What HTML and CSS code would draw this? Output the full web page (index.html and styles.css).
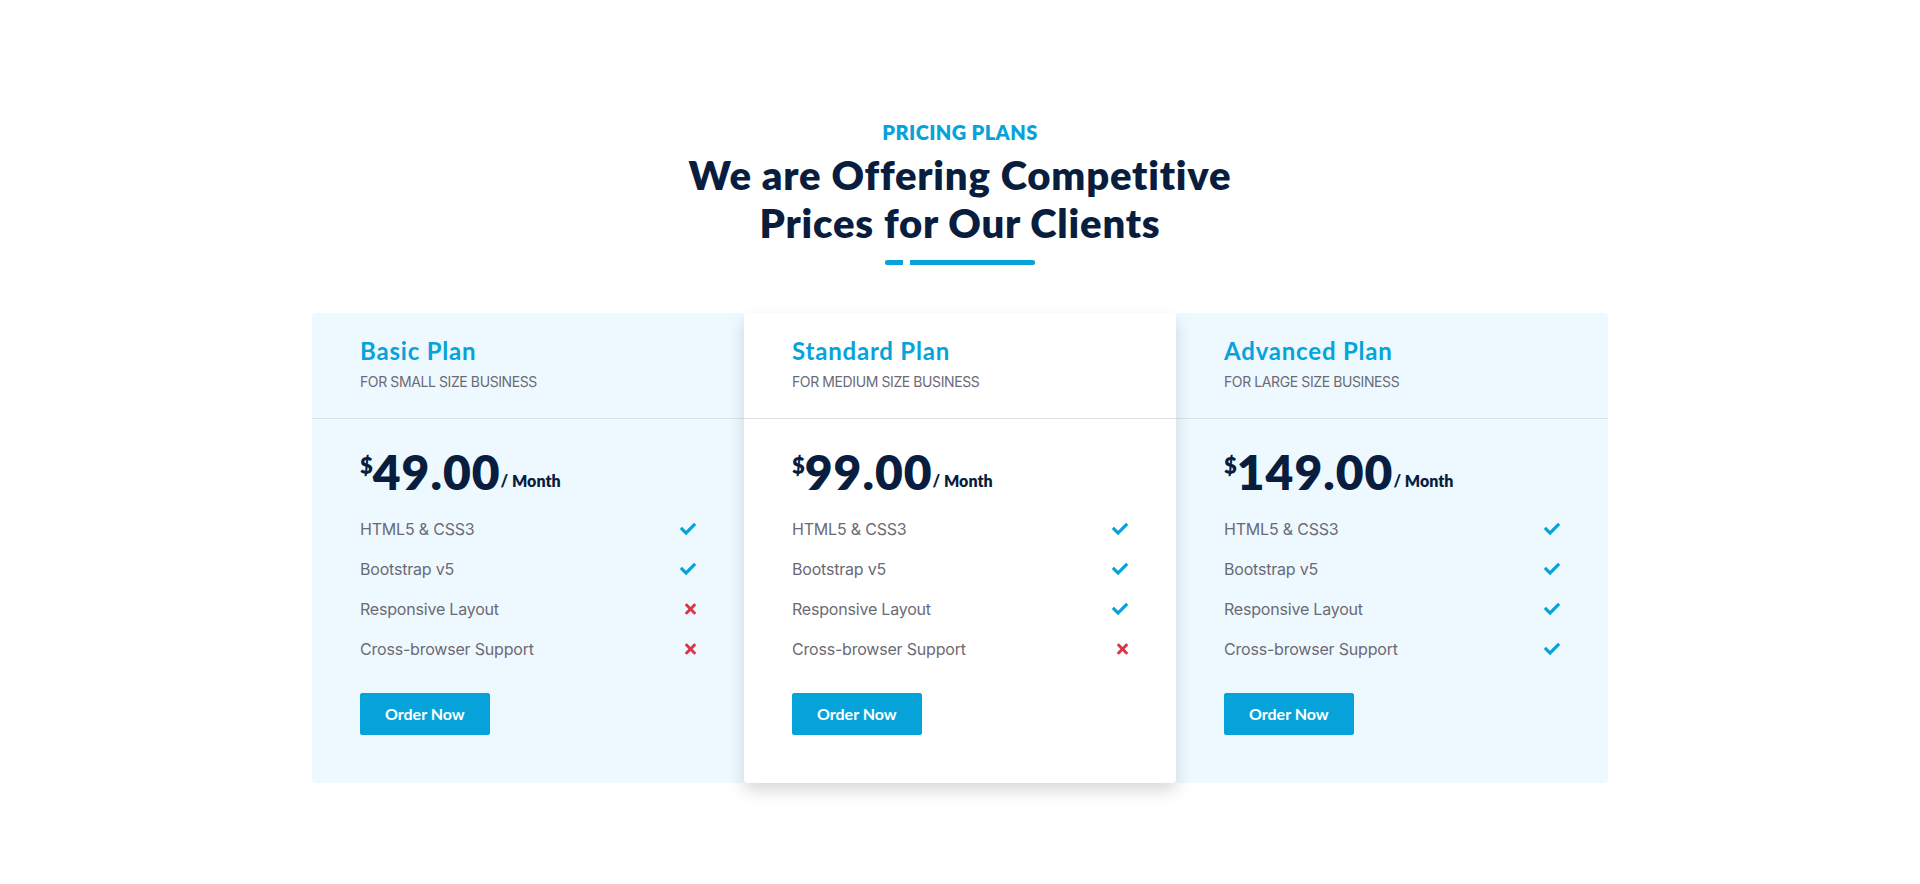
FILE: index.html
```
<!DOCTYPE html>
<html lang="en">
<head>
<meta charset="utf-8">
<title>Pricing Plans</title>
<link rel="stylesheet" href="styles.css">
</head>
<body>
<section class="pricing">
  <div class="section-title">
    <h5 class="eyebrow">Pricing Plans</h5>
    <h1 class="title">We are Offering Competitive Prices for Our Clients</h1>
    <div class="underline"><span class="seg-a"></span><span class="seg-b"></span></div>
  </div>

  <div class="plans">
    <div class="plan">
      <div class="plan-head">
        <h4 class="plan-name">Basic Plan</h4>
        <div class="plan-sub">For Small Size Business</div>
      </div>
      <div class="plan-body">
        <h1 class="price"><span class="cur">$</span><span class="amt">49.00</span><span class="per">/ Month</span></h1>
        <ul class="features">
          <li><span>HTML5 &amp; CSS3</span><svg class="ic-check" viewBox="0 0 512 512"><path d="M173.898 439.404l-166.4-166.4c-9.997-9.997-9.997-26.206 0-36.204l36.203-36.204c9.997-9.998 26.207-9.998 36.204 0L192 312.69 432.095 72.596c9.997-9.997 26.207-9.997 36.204 0l36.203 36.204c9.997 9.997 9.997 26.206 0 36.204l-294.4 294.401c-9.998 9.997-26.207 9.997-36.204-.001z"/></svg></li>
          <li><span>Bootstrap v5</span><svg class="ic-check" viewBox="0 0 512 512"><path d="M173.898 439.404l-166.4-166.4c-9.997-9.997-9.997-26.206 0-36.204l36.203-36.204c9.997-9.998 26.207-9.998 36.204 0L192 312.69 432.095 72.596c9.997-9.997 26.207-9.997 36.204 0l36.203 36.204c9.997 9.997 9.997 26.206 0 36.204l-294.4 294.401c-9.998 9.997-26.207 9.997-36.204-.001z"/></svg></li>
          <li><span>Responsive Layout</span><svg class="ic-times" viewBox="0 0 352 512"><path d="M242.72 256l100.07-100.07c12.28-12.28 12.28-32.19 0-44.48l-22.24-22.24c-12.28-12.28-32.19-12.28-44.48 0L176 189.28 75.93 89.21c-12.28-12.28-32.19-12.28-44.48 0L9.21 111.45c-12.28 12.28-12.28 32.19 0 44.48L109.28 256 9.21 356.07c-12.28 12.28-12.28 32.19 0 44.48l22.24 22.24c12.28 12.28 32.2 12.28 44.48 0L176 322.72l100.07 100.07c12.28 12.28 32.2 12.28 44.48 0l22.24-22.240c12.28-12.28 12.28-32.19 0-44.48L242.72 256z"/></svg></li>
          <li><span>Cross-browser Support</span><svg class="ic-times" viewBox="0 0 352 512"><path d="M242.72 256l100.07-100.07c12.28-12.28 12.28-32.19 0-44.48l-22.24-22.24c-12.28-12.28-32.19-12.28-44.48 0L176 189.28 75.93 89.21c-12.28-12.28-32.19-12.28-44.48 0L9.21 111.45c-12.28 12.28-12.28 32.19 0 44.48L109.28 256 9.21 356.07c-12.28 12.28-12.28 32.19 0 44.48l22.24 22.24c12.28 12.28 32.2 12.28 44.48 0L176 322.72l100.07 100.07c12.28 12.28 32.2 12.28 44.48 0l22.24-22.240c12.28-12.28 12.28-32.19 0-44.48L242.72 256z"/></svg></li>
        </ul>
        <a class="btn" href="#">Order Now</a>
      </div>
    </div>

    <div class="plan plan-featured">
      <div class="plan-head">
        <h4 class="plan-name">Standard Plan</h4>
        <div class="plan-sub">For Medium Size Business</div>
      </div>
      <div class="plan-body">
        <h1 class="price"><span class="cur">$</span><span class="amt">99.00</span><span class="per">/ Month</span></h1>
        <ul class="features">
          <li><span>HTML5 &amp; CSS3</span><svg class="ic-check" viewBox="0 0 512 512"><path d="M173.898 439.404l-166.4-166.4c-9.997-9.997-9.997-26.206 0-36.204l36.203-36.204c9.997-9.998 26.207-9.998 36.204 0L192 312.69 432.095 72.596c9.997-9.997 26.207-9.997 36.204 0l36.203 36.204c9.997 9.997 9.997 26.206 0 36.204l-294.4 294.401c-9.998 9.997-26.207 9.997-36.204-.001z"/></svg></li>
          <li><span>Bootstrap v5</span><svg class="ic-check" viewBox="0 0 512 512"><path d="M173.898 439.404l-166.4-166.4c-9.997-9.997-9.997-26.206 0-36.204l36.203-36.204c9.997-9.998 26.207-9.998 36.204 0L192 312.69 432.095 72.596c9.997-9.997 26.207-9.997 36.204 0l36.203 36.204c9.997 9.997 9.997 26.206 0 36.204l-294.4 294.401c-9.998 9.997-26.207 9.997-36.204-.001z"/></svg></li>
          <li><span>Responsive Layout</span><svg class="ic-check" viewBox="0 0 512 512"><path d="M173.898 439.404l-166.4-166.4c-9.997-9.997-9.997-26.206 0-36.204l36.203-36.204c9.997-9.998 26.207-9.998 36.204 0L192 312.69 432.095 72.596c9.997-9.997 26.207-9.997 36.204 0l36.203 36.204c9.997 9.997 9.997 26.206 0 36.204l-294.4 294.401c-9.998 9.997-26.207 9.997-36.204-.001z"/></svg></li>
          <li><span>Cross-browser Support</span><svg class="ic-times" viewBox="0 0 352 512"><path d="M242.72 256l100.07-100.07c12.28-12.28 12.28-32.19 0-44.48l-22.24-22.24c-12.28-12.28-32.19-12.28-44.48 0L176 189.28 75.93 89.21c-12.28-12.28-32.19-12.28-44.48 0L9.21 111.45c-12.28 12.28-12.28 32.19 0 44.48L109.28 256 9.21 356.07c-12.28 12.28-12.28 32.19 0 44.48l22.24 22.24c12.28 12.28 32.2 12.28 44.48 0L176 322.72l100.07 100.07c12.28 12.28 32.2 12.28 44.48 0l22.24-22.240c12.28-12.28 12.28-32.19 0-44.48L242.72 256z"/></svg></li>
        </ul>
        <a class="btn" href="#">Order Now</a>
      </div>
    </div>

    <div class="plan">
      <div class="plan-head">
        <h4 class="plan-name">Advanced Plan</h4>
        <div class="plan-sub">For Large Size Business</div>
      </div>
      <div class="plan-body">
        <h1 class="price"><span class="cur">$</span><span class="amt">149.00</span><span class="per">/ Month</span></h1>
        <ul class="features">
          <li><span>HTML5 &amp; CSS3</span><svg class="ic-check" viewBox="0 0 512 512"><path d="M173.898 439.404l-166.4-166.4c-9.997-9.997-9.997-26.206 0-36.204l36.203-36.204c9.997-9.998 26.207-9.998 36.204 0L192 312.69 432.095 72.596c9.997-9.997 26.207-9.997 36.204 0l36.203 36.204c9.997 9.997 9.997 26.206 0 36.204l-294.4 294.401c-9.998 9.997-26.207 9.997-36.204-.001z"/></svg></li>
          <li><span>Bootstrap v5</span><svg class="ic-check" viewBox="0 0 512 512"><path d="M173.898 439.404l-166.4-166.4c-9.997-9.997-9.997-26.206 0-36.204l36.203-36.204c9.997-9.998 26.207-9.998 36.204 0L192 312.69 432.095 72.596c9.997-9.997 26.207-9.997 36.204 0l36.203 36.204c9.997 9.997 9.997 26.206 0 36.204l-294.4 294.401c-9.998 9.997-26.207 9.997-36.204-.001z"/></svg></li>
          <li><span>Responsive Layout</span><svg class="ic-check" viewBox="0 0 512 512"><path d="M173.898 439.404l-166.4-166.4c-9.997-9.997-9.997-26.206 0-36.204l36.203-36.204c9.997-9.998 26.207-9.998 36.204 0L192 312.69 432.095 72.596c9.997-9.997 26.207-9.997 36.204 0l36.203 36.204c9.997 9.997 9.997 26.206 0 36.204l-294.4 294.401c-9.998 9.997-26.207 9.997-36.204-.001z"/></svg></li>
          <li><span>Cross-browser Support</span><svg class="ic-check" viewBox="0 0 512 512"><path d="M173.898 439.404l-166.4-166.4c-9.997-9.997-9.997-26.206 0-36.204l36.203-36.204c9.997-9.998 26.207-9.998 36.204 0L192 312.69 432.095 72.596c9.997-9.997 26.207-9.997 36.204 0l36.203 36.204c9.997 9.997 9.997 26.206 0 36.204l-294.4 294.401c-9.998 9.997-26.207 9.997-36.204-.001z"/></svg></li>
        </ul>
        <a class="btn" href="#">Order Now</a>
      </div>
    </div>
  </div>
</section>
</body>
</html>
```
FILE: styles.css
```
* { box-sizing: border-box; }

html, body {
  margin: 0;
  padding: 0;
  background: #ffffff;
}

body {
  font-family: "Inter", "Open Sans", sans-serif;
  font-size: 16px;
  line-height: 24px;
  color: #6B6A75;
}

.pricing {
  width: 1296px;
  margin: 0 auto;
  padding-top: 120px;
  padding-bottom: 100px;
}

.section-title {
  max-width: 600px;
  margin: 0 auto 48px;
  text-align: center;
  display: flex;
  flex-direction: column;
  align-items: center;
}

.eyebrow {
  margin: 0 0 7px;
  font-family: "Lato", sans-serif;
  font-size: 20px;
  line-height: 24px;
  font-weight: 800;
  letter-spacing: 0.4px;
  text-transform: uppercase;
  color: #06A3DA;
}

.title {
  margin: 0 0 13px;
  font-family: "Lato", sans-serif;
  font-size: 40px;
  line-height: 48px;
  font-weight: 800;
  letter-spacing: 0.8px;
  color: #091E3E;
}

.underline {
  display: flex;
  width: 150px;
  height: 5px;
}

.seg-a {
  width: 18px;
  height: 5px;
  background: #06A3DA;
  border-radius: 2px 0 0 2px;
}

.seg-b {
  flex: 1;
  height: 5px;
  margin-left: 7px;
  background: #06A3DA;
  border-radius: 0 2px 2px 0;
}

.plans {
  display: grid;
  grid-template-columns: repeat(3, 1fr);
}

.plan {
  background: #EEF9FF;
  border-radius: 4px;
}

.plan-featured {
  position: relative;
  z-index: 1;
  background: #ffffff;
  box-shadow: 0 8px 16px rgba(0, 0, 0, 0.15);
}

.plan-head {
  padding: 24px 48px;
  margin-bottom: 24px;
  border-bottom: 1px solid #dee2e6;
}

.plan-name {
  margin: 0 0 4px;
  font-family: "Lato", sans-serif;
  font-size: 24px;
  line-height: 28.8px;
  font-weight: 700;
  letter-spacing: 0.8px;
  color: #06A3DA;
}

.plan-sub {
  font-size: 14px;
  line-height: 24px;
  letter-spacing: -0.4px;
  text-transform: uppercase;
  color: #6B6A75;
}

.plan-body {
  padding: 0 48px 48px;
  display: flex;
  flex-direction: column;
}

.price {
  margin: 0 0 16px;
  display: flex;
  align-items: flex-start;
  font-family: "Lato", sans-serif;
  font-weight: 800;
  color: #091E3E;
  height: 58px;
}

.cur {
  font-size: 22px;
  line-height: 45px;
}

.amt {
  font-size: 48px;
  line-height: 58px;
  letter-spacing: 1px;
}

.per {
  align-self: flex-end;
  font-size: 16px;
  line-height: 40px;
}

.features {
  list-style: none;
  margin: 0;
  padding: 0;
  display: flex;
  flex-direction: column;
  gap: 16px;
}

.features li {
  display: flex;
  justify-content: space-between;
  align-items: flex-start;
  line-height: 24px;
  letter-spacing: -0.2px;
}

.ic-check {
  width: 16px;
  height: 16px;
  margin-top: 4px;
  fill: #06A3DA;
}

.ic-times {
  width: 11px;
  height: 16px;
  margin-top: 4px;
  fill: #DC3545;
}

.btn {
  align-self: flex-start;
  margin-top: 32px;
  padding: 8px 24px;
  border: 1px solid #06A3DA;
  border-radius: 2px;
  background: #06A3DA;
  color: #ffffff;
  font-family: "Lato", sans-serif;
  font-size: 16px;
  line-height: 24px;
  font-weight: 700;
  text-decoration: none;
}
```
